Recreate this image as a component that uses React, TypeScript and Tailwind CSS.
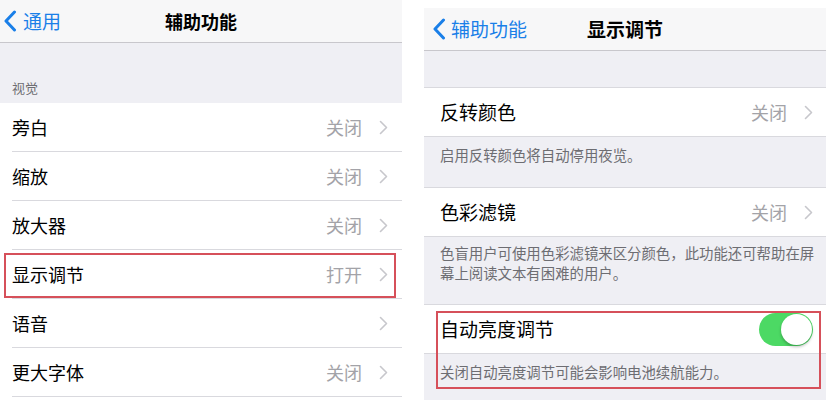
import React from "react";

const FONT = { fontFamily: '"Noto Sans CJK SC", "Noto Sans", sans-serif' };

function Chevron() {
  return (
    <svg width="9" height="15" viewBox="0 0 9 15" className="shrink-0">
      <path d="M1.5 1.5 L7.5 7.5 L1.5 13.5" fill="none" stroke="#c7c7cc" strokeWidth="1.6" strokeLinecap="round" strokeLinejoin="round" />
    </svg>
  );
}

function BackChevron() {
  return (
    <svg width="13" height="22" viewBox="0 0 13 22" className="shrink-0">
      <path d="M10.5 2 L2 11 L10.5 20" fill="none" stroke="#1a7fe8" strokeWidth="3" strokeLinecap="round" strokeLinejoin="round" />
    </svg>
  );
}

function Row({ label, value, pl, size }: { label: string; value?: string; pl: string; size: string }) {
  return (
    <div className={`h-[49px] bg-white flex ${pl}`}>
      <div className="flex-1 flex items-center pr-[14px] border-b border-[#d9d9de]">
        <span className={`flex-1 text-black ${size}`}>{label}</span>
        {value && <span className={`text-[#a3a3a8] mr-[17px] ${size}`}>{value}</span>}
        <Chevron />
      </div>
    </div>
  );
}

export default function App() {
  return (
    <div className="w-[826px] h-[400px] bg-white flex overflow-hidden" style={FONT}>
      {/* Left panel */}
      <div className="w-[402px] h-[400px] bg-white flex flex-col">
        <div className="h-[43px] bg-[#f7f7f8] border-b border-[#c8c7cc] relative flex items-center">
          <div className="absolute left-[4px] top-0 h-[42px] flex items-center gap-[6px]">
            <BackChevron />
            <span className="text-[19px] text-[#1a7fe8]">通用</span>
          </div>
          <div className="flex-1 text-center text-[18px] font-semibold text-black">辅助功能</div>
        </div>
        <div className="h-[60px] bg-[#efeff4] flex items-end pl-[12px] pb-[6px]">
          <span className="text-[13px] text-[#6d6d72]">视觉</span>
        </div>
        <Row label="旁白" value="关闭" pl="pl-[12px]" size="text-[18px]" />
        <Row label="缩放" value="关闭" pl="pl-[12px]" size="text-[18px]" />
        <Row label="放大器" value="关闭" pl="pl-[12px]" size="text-[18px]" />
        <div className="relative">
          <Row label="显示调节" value="打开" pl="pl-[12px]" size="text-[18px]" />
          <div className="absolute left-[4px] right-[6px] top-[3px] h-[45px] border-2 border-[#d6505a]" />
        </div>
        <Row label="语音" pl="pl-[12px]" size="text-[18px]" />
        <Row label="更大字体" value="关闭" pl="pl-[12px]" size="text-[18px]" />
      </div>

      <div className="w-[22px]" />

      {/* Right panel */}
      <div className="w-[402px] h-[392px] mt-[8px] bg-[#efeff4] flex flex-col">
        <div className="h-[43px] bg-[#f7f7f8] border-b border-[#c8c7cc] relative flex items-center">
          <div className="absolute left-[9px] top-0 h-[42px] flex items-center gap-[5px]">
            <BackChevron />
            <span className="text-[19px] text-[#1a7fe8]">辅助功能</span>
          </div>
          <div className="flex-1 text-center text-[19px] font-semibold text-black">显示调节</div>
        </div>
        <div className="h-[37px] border-b border-[#d9d9de]" />
        <div className="h-[49px] bg-white flex items-center pl-[16px] pr-[13px] border-b border-[#d9d9de]">
          <span className="flex-1 text-[19px] text-black">反转颜色</span>
          <span className="text-[18px] text-[#a3a3a8] mr-[17px]">关闭</span>
          <Chevron />
        </div>
        <div className="h-[51px] px-[16px] pt-[5px] border-b border-[#d9d9de]">
          <span className="text-[14.4px] leading-[20px] text-[#6d6d72]">启用反转颜色将自动停用夜览。</span>
        </div>
        <div className="h-[49px] bg-white flex items-center pl-[16px] pr-[13px] border-b border-[#d9d9de]">
          <span className="flex-1 text-[19px] text-black">色彩滤镜</span>
          <span className="text-[18px] text-[#a3a3a8] mr-[17px]">关闭</span>
          <Chevron />
        </div>
        <div className="h-[68px] px-[16px] pt-[6px] border-b border-[#d9d9de]">
          <p className="text-[14.4px] leading-[20px] text-[#6d6d72] whitespace-nowrap">
            色盲用户可使用色彩滤镜来区分颜色，此功能还可帮助在屏
            <br />
            幕上阅读文本有困难的用户。
          </p>
        </div>
        <div className="relative flex-1 flex flex-col">
          <div className="h-[49px] bg-white flex items-center pl-[16px] pr-[13px] border-b border-[#d9d9de]">
            <span className="flex-1 text-[19px] text-black">自动亮度调节</span>
            <div className="w-[54px] h-[33px] rounded-full bg-[#4cd964] relative">
              <div className="absolute right-[1px] top-[1px] w-[31px] h-[31px] rounded-full bg-white shadow-[0_2px_3px_rgba(0,0,0,0.25)]" />
            </div>
          </div>
          <div className="px-[16px] pt-[5px]">
            <span className="text-[14.4px] leading-[20px] text-[#6d6d72]">关闭自动亮度调节可能会影响电池续航能力。</span>
          </div>
          <div className="absolute left-[12px] right-[5px] top-[6px] h-[78px] border-2 border-[#d6505a]" />
        </div>
      </div>
    </div>
  );
}
